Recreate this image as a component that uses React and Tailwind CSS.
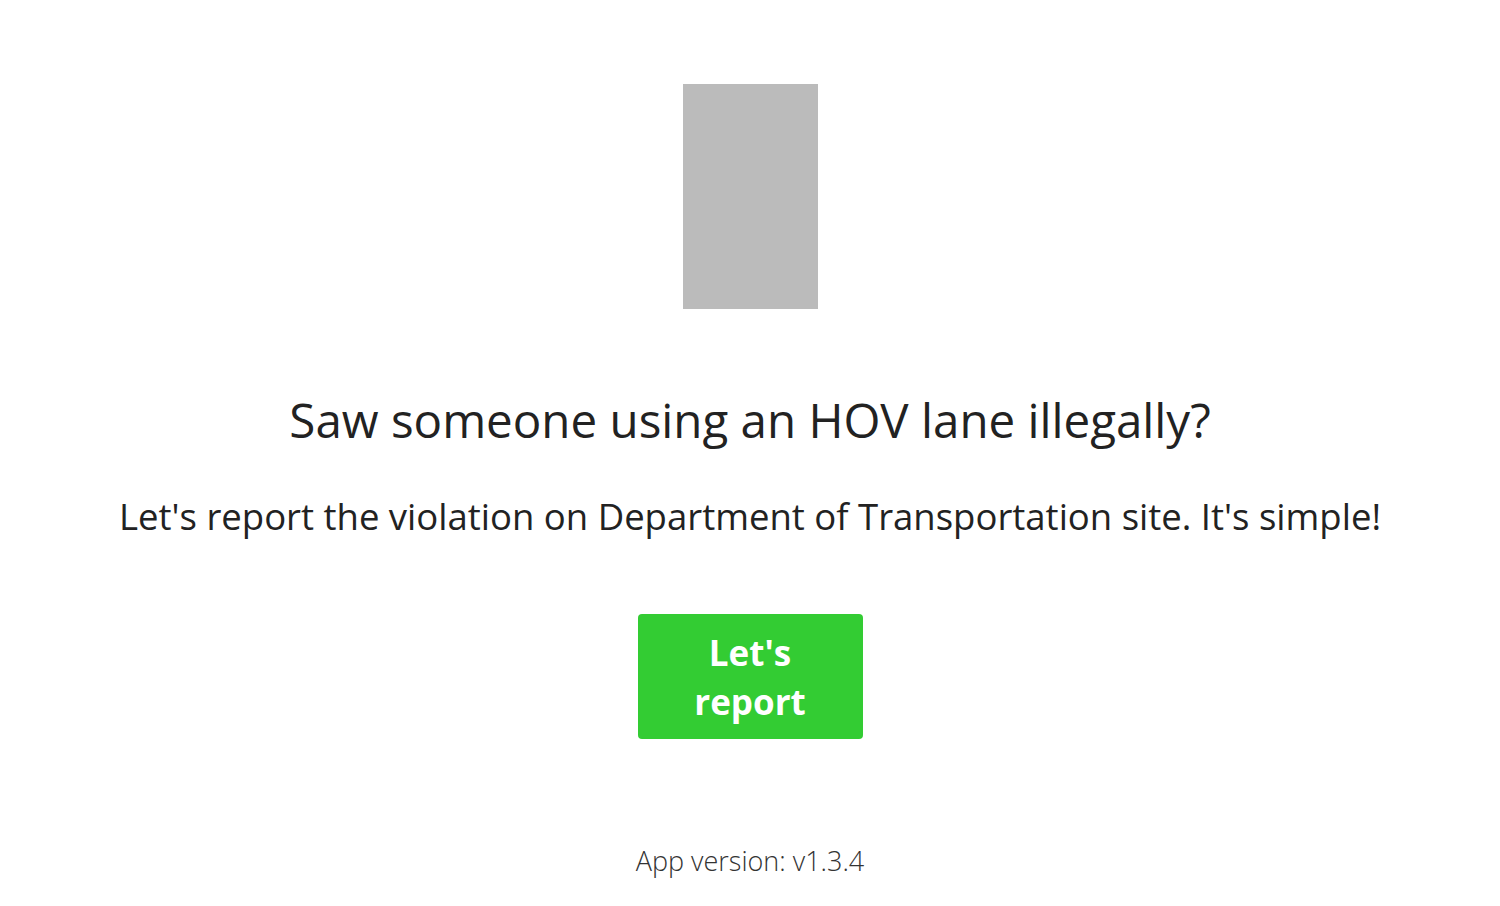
export default function App() {
  return (
    <div
      className="flex min-h-screen flex-col items-center bg-white text-[#212529]"
      style={{ fontFamily: '"Open Sans", "Noto Sans", sans-serif' }}
    >
      {/* placeholder logo */}
      <div className="mt-[84px] h-[225px] w-[135px] bg-[#bbbbbb]" />

      <h1 className="mt-[81px] text-[47.5px] leading-[60px] font-normal text-[#222]">
        Saw someone using an HOV lane illegally?
      </h1>

      <p className="mt-[43px] text-[36.5px] leading-[46px] text-[#222]">
        Let's report the violation on Department of Transportation site. It's simple!
      </p>

      <button className="mt-[75px] flex h-[125px] w-[225px] items-center justify-center rounded-[4px] bg-[#33cc33] px-12 text-[35px] leading-[49px] font-bold text-white">
        Let's report
      </button>

      <div className="mt-[104px] text-[27px] leading-[36px] font-light text-[#333]">
        App version: v1.3.4
      </div>
    </div>
  );
}
